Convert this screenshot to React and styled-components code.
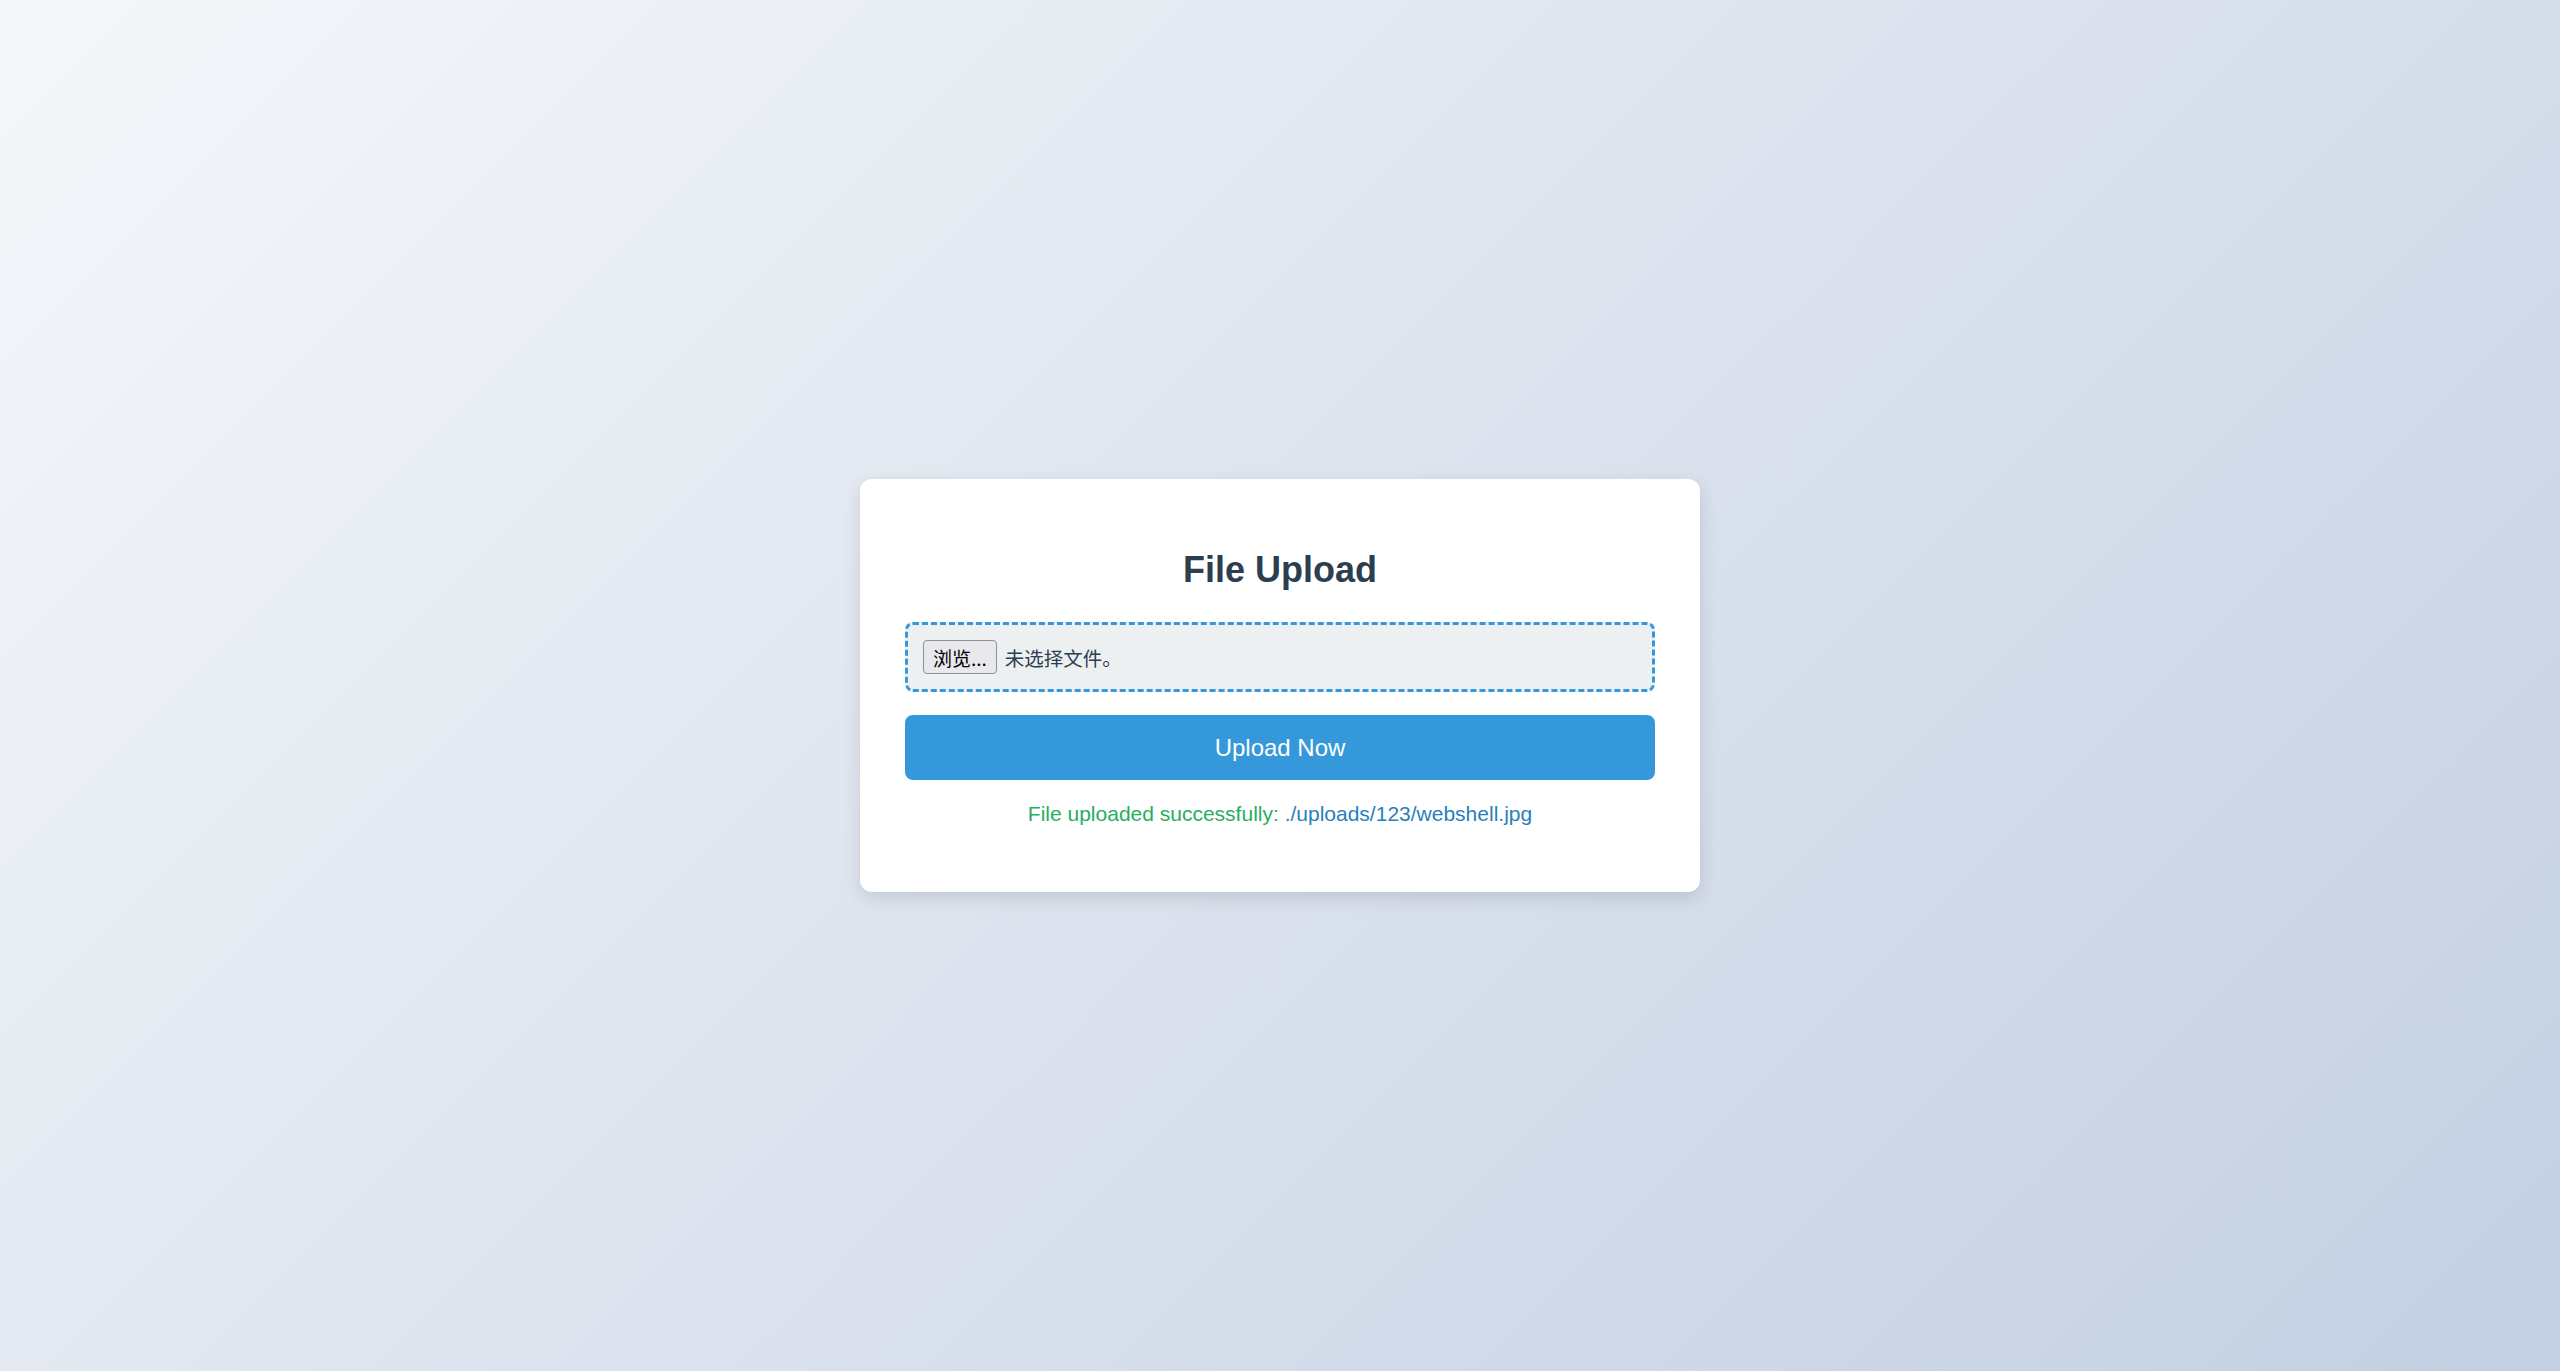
import React, { useState } from "react";
import styled, { createGlobalStyle } from "styled-components";

const GlobalStyle = createGlobalStyle`
  * {
    box-sizing: border-box;
  }
  html, body {
    margin: 0;
    padding: 0;
  }
  body {
    font-family: "Liberation Sans", Arial, "Noto Sans CJK SC", sans-serif;
    background: linear-gradient(135deg, #f5f7fa 0%, #c3cfe2 100%);
    min-height: 100vh;
  }
`;

const Page = styled.div`
  display: flex;
  justify-content: center;
  align-items: center;
  min-height: 100vh;
`;

const Card = styled.div`
  width: 840px;
  padding: 45px;
  background-color: #ffffff;
  border-radius: 12px;
  box-shadow: 0 6px 18px rgba(0, 0, 0, 0.12);
  text-align: center;
`;

const Title = styled.h2`
  margin: 25px 0 31px;
  font-size: 36px;
  font-weight: 700;
  color: #2c3e50;
`;

const DropZone = styled.label`
  display: flex;
  align-items: center;
  gap: 8px;
  padding: 15px;
  background-color: #ecf0f1;
  border: 3px dashed #3498db;
  border-radius: 8px;
  cursor: pointer;

  input {
    display: none;
  }
`;

const BrowseButton = styled.span`
  display: inline-flex;
  align-items: center;
  height: 34px;
  padding: 0 9px;
  background-color: #e9e9ed;
  border: 1px solid #8f8f9d;
  border-radius: 4px;
  color: #000000;
  font-family: "Noto Sans CJK SC", sans-serif;
  font-size: 19px;
`;

const FileName = styled.span`
  color: #2c3e50;
  font-family: "Noto Sans CJK SC", sans-serif;
  font-size: 19.5px;
`;

const UploadButton = styled.button`
  display: block;
  width: 100%;
  height: 65px;
  margin-top: 23px;
  border: none;
  border-radius: 8px;
  background-color: #3498db;
  color: #ffffff;
  font-family: "Liberation Sans", Arial, sans-serif;
  font-size: 24px;
  cursor: pointer;

  &:hover {
    background-color: #2f89c5;
  }
`;

const Message = styled.p`
  margin: 22px 0 21px;
  font-size: 21px;
  color: ${(props) => props.$color || "#27ae60"};

  span {
    color: #2980b9;
  }
`;

const App = () => {
  const [fileName, setFileName] = useState("");

  return (
    <>
      <GlobalStyle />
      <Page>
        <Card>
          <Title>File Upload</Title>
          <form onSubmit={(e) => e.preventDefault()}>
            <DropZone>
              <input
                type="file"
                onChange={(e) => setFileName(e.target.files[0]?.name || "")}
              />
              <BrowseButton>浏览...</BrowseButton>
              <FileName>{fileName || "未选择文件。"}</FileName>
            </DropZone>
            <UploadButton type="submit">Upload Now</UploadButton>
          </form>
          <Message>
            File uploaded successfully: <span>./uploads/123/webshell.jpg</span>
          </Message>
        </Card>
      </Page>
    </>
  );
};

export default App;
